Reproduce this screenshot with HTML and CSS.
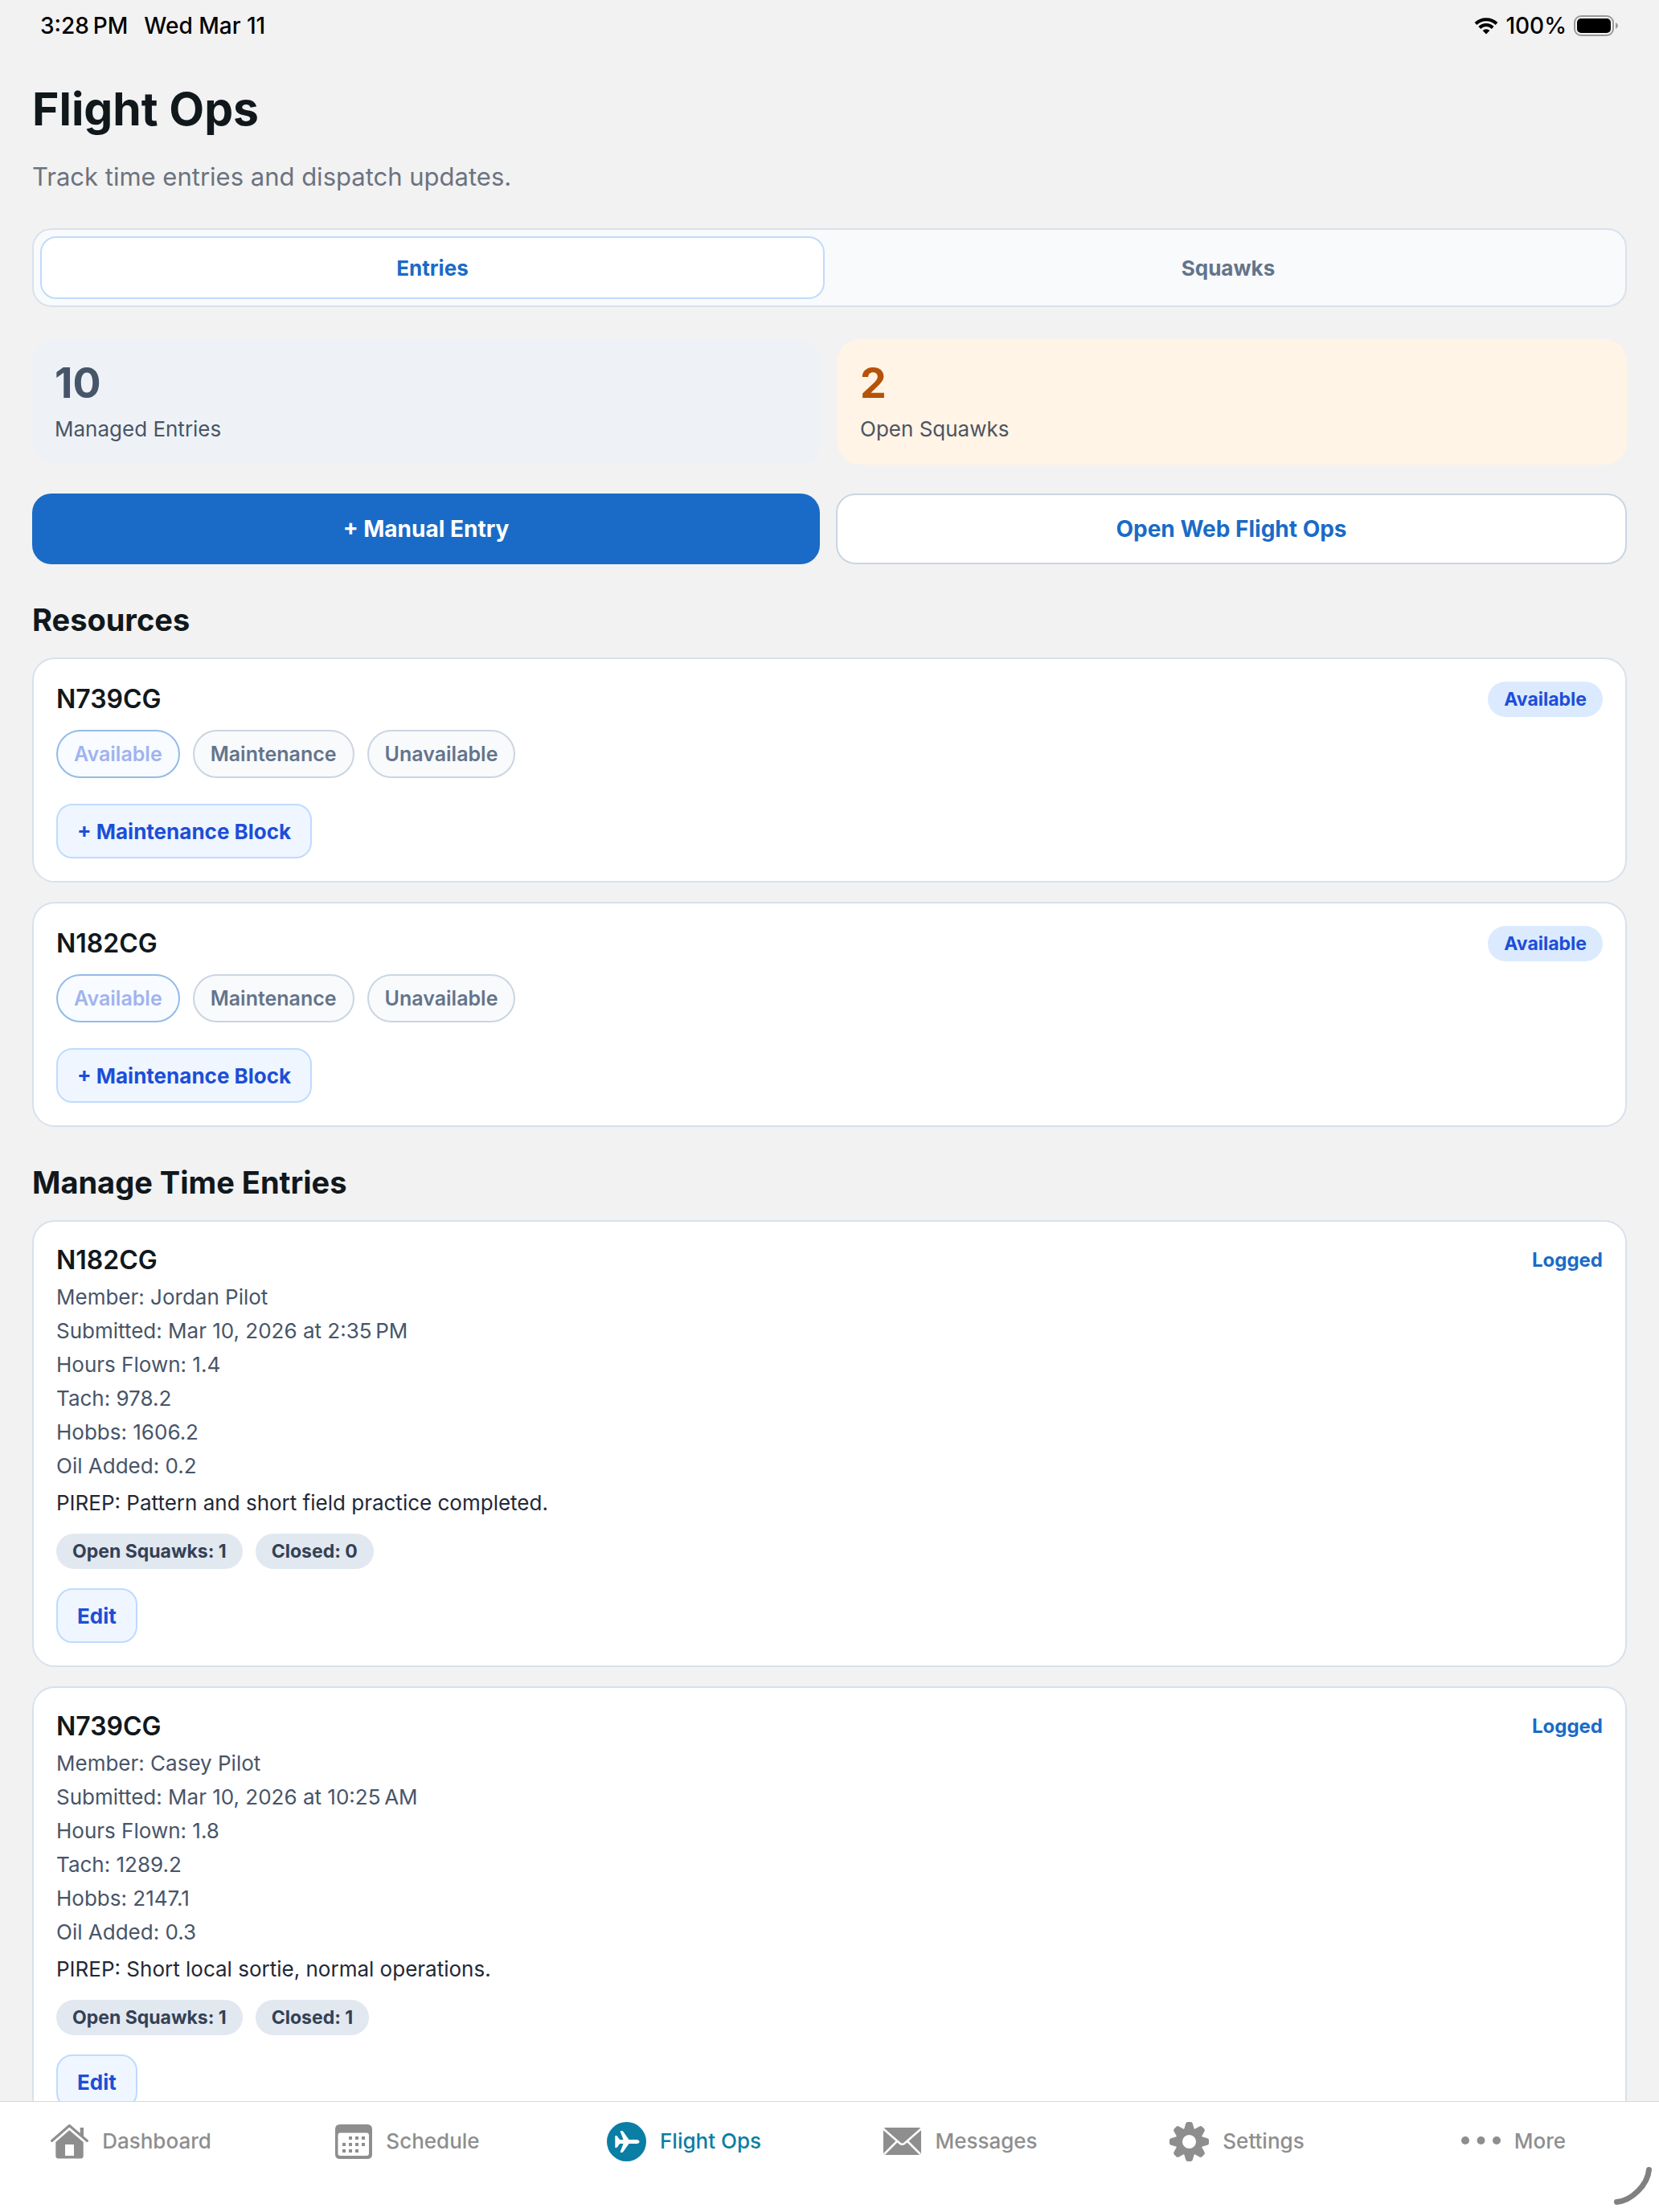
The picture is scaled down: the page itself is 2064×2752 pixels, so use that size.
FILE: index.html
```html
<!DOCTYPE html>
<html lang="en">
<head>
    <meta charset="UTF-8">
    <meta name="viewport" content="width=device-width, initial-scale=1.0">
    <title>Flight Ops</title>
    <link rel="stylesheet" href="styles.css">
</head>
<body>
    <div class="status-bar">
        <div class="status-left">
            <span>3:28&#8239;PM</span>
            <span>Wed Mar 11</span>
        </div>
        <div class="status-right">
            <svg width="30" height="22" viewBox="0 0 30 22" fill="none" stroke="#000" stroke-width="4">
                <path d="M2 8.500A18.500 18.500 0 0 1 28 8.500"/>
                <path d="M6.800 13.500A11.600 11.600 0 0 1 23.200 13.500"/>
                <path d="M15 21.500L10.600 17A6.200 6.200 0 0 1 19.400 17Z" fill="#000" stroke="none"/>
            </svg>
            <span>100%</span>
            <svg width="56" height="26" viewBox="0 0 56 26">
                <rect x="1" y="1" width="48" height="24" rx="8" fill="none" stroke="#999" stroke-width="2"/>
                <rect x="4" y="4" width="42" height="18" rx="5" fill="#000"/>
                <path d="M52 9q3 1.500 3 4t-3 4z" fill="#999"/>
            </svg>
        </div>
    </div>

    <main class="content">
        <h1>Flight Ops</h1>
        <p class="subtitle">Track time entries and dispatch updates.</p>

        <div class="segments">
            <button type="button" class="segment active">Entries</button>
            <button type="button" class="segment">Squawks</button>
        </div>

        <div class="stats">
            <div class="stat">
                <div class="stat-value">10</div>
                <div class="stat-label">Managed Entries</div>
            </div>
            <div class="stat stat-warning">
                <div class="stat-value">2</div>
                <div class="stat-label">Open Squawks</div>
            </div>
        </div>

        <div class="actions">
            <button type="button" class="action action-primary">+ Manual Entry</button>
            <a href="#web" class="action">Open Web Flight Ops</a>
        </div>

        <section>
            <h2>Resources</h2>

            <div class="card">
                <div class="card-header">
                    <h3>N739CG</h3>
                    <span class="badge">Available</span>
                </div>
                <div class="status-options">
                    <button type="button" class="status-option" disabled>Available</button>
                    <button type="button" class="status-option">Maintenance</button>
                    <button type="button" class="status-option">Unavailable</button>
                </div>
                <button type="button" class="small-button block-button">+ Maintenance Block</button>
            </div>

            <div class="card">
                <div class="card-header">
                    <h3>N182CG</h3>
                    <span class="badge">Available</span>
                </div>
                <div class="status-options">
                    <button type="button" class="status-option" disabled>Available</button>
                    <button type="button" class="status-option">Maintenance</button>
                    <button type="button" class="status-option">Unavailable</button>
                </div>
                <button type="button" class="small-button block-button">+ Maintenance Block</button>
            </div>
        </section>

        <section>
            <h2>Manage Time Entries</h2>

            <div class="card">
                <div class="card-header entry-header">
                    <h3>N182CG</h3>
                    <span class="entry-status">Logged</span>
                </div>
                <div class="entry-details">
                    <p>Member: Jordan Pilot</p>
                    <p>Submitted: Mar 10, 2026 at 2:35&#8239;PM</p>
                    <p>Hours Flown: 1.4</p>
                    <p>Tach: 978.2</p>
                    <p>Hobbs: 1606.2</p>
                    <p>Oil Added: 0.2</p>
                    <p class="pirep">PIREP: Pattern and short field practice completed.</p>
                </div>
                <div class="squawk-counts">
                    <span class="badge badge-gray">Open Squawks: 1</span>
                    <span class="badge badge-gray">Closed: 0</span>
                </div>
                <button type="button" class="small-button">Edit</button>
            </div>

            <div class="card">
                <div class="card-header entry-header">
                    <h3>N739CG</h3>
                    <span class="entry-status">Logged</span>
                </div>
                <div class="entry-details">
                    <p>Member: Casey Pilot</p>
                    <p>Submitted: Mar 10, 2026 at 10:25&#8239;AM</p>
                    <p>Hours Flown: 1.8</p>
                    <p>Tach: 1289.2</p>
                    <p>Hobbs: 2147.1</p>
                    <p>Oil Added: 0.3</p>
                    <p class="pirep">PIREP: Short local sortie, normal operations.</p>
                </div>
                <div class="squawk-counts">
                    <span class="badge badge-gray">Open Squawks: 1</span>
                    <span class="badge badge-gray">Closed: 1</span>
                </div>
                <button type="button" class="small-button">Edit</button>
            </div>
        </section>
    </main>

    <nav class="tab-bar">
        <a href="#dashboard" class="tab">
            <svg width="47" height="48" viewBox="0 0 47 48" fill="currentColor">
                <path d="M36.700 7h4.300v13l-4.300-4z"/>
                <path d="M1.500 23.500L23.300 4.500L45.500 23.500" fill="none" stroke="currentColor" stroke-width="3" stroke-linecap="round" stroke-linejoin="round"/>
                <path fill-rule="evenodd" d="M23.300 10.300L40.700 25V42q0 3.500-3.500 3.500H9.800q-3.500 0-3.500-3.500V25zM18 28v14h11V28z"/>
            </svg>
            <span>Dashboard</span>
        </a>
        <a href="#schedule" class="tab">
            <svg width="46" height="43" viewBox="0 0 46 43" fill="currentColor">
                <path fill-rule="evenodd" d="M6 0h34q6 0 6 6v31q0 6-6 6H6q-6 0-6-6V6q0-6 6-6zM6.500 10.500q-3 0-3 3V36q0 3 3 3H39q3 0 3-3V13.500q0-3-3-3z"/>
                <path d="M17 15h4v4h-4zM25 15h4v4h-4zM33 15h4v4h-4zM9 23h4v4h-4zM17 23h4v4h-4zM25 23h4v4h-4zM33 23h4v4h-4zM9 31h4v4h-4zM17 31h4v4h-4zM25 31h4v4h-4z"/>
            </svg>
            <span>Schedule</span>
        </a>
        <a href="#flight-ops" class="tab active">
            <svg width="49" height="49" viewBox="0 0 49 49">
                <circle cx="24.500" cy="24.500" r="24.500" fill="currentColor"/>
                <path d="M10.300 17.500q0-.5.500-.5h1q.7 0 1.200.7L16 22h4.500L16.800 12.200q-.4-1.200.8-1.200h1.200q.8 0 1.400.8L27.500 22H37q3.500.5 3.500 2.500T37 27h-9.500l-7.300 10.200q-.6.800-1.400.8h-1.200q-1.200 0-.8-1.200L20.500 27H16l-3 4.300q-.5.700-1.200.7h-1q-.5 0-.5-.5z" fill="#fff"/>
            </svg>
            <span>Flight Ops</span>
        </a>
        <a href="#messages" class="tab">
            <svg width="47" height="34" viewBox="0 0 47 34">
                <rect width="47" height="34" rx="3" fill="currentColor"/>
                <path d="M0 1.500L20.500 19.500q3 2.500 6 0L47 1.500M1 33L17 17M46 33L30 17" fill="none" stroke="#fff" stroke-width="2.500"/>
            </svg>
            <span>Messages</span>
        </a>
        <a href="#settings" class="tab">
            <svg width="49" height="49" viewBox="-24.500 -24.500 49 49">
                <defs>
                    <path id="tooth" d="M-6.500-15L-4.300-22.500Q-3.800-24.500-2-24.500H2Q3.800-24.500 4.300-22.500L6.500-15z"/>
                </defs>
                <g fill="currentColor">
                    <use href="#tooth"/>
                    <use href="#tooth" transform="rotate(45)"/>
                    <use href="#tooth" transform="rotate(90)"/>
                    <use href="#tooth" transform="rotate(135)"/>
                    <use href="#tooth" transform="rotate(180)"/>
                    <use href="#tooth" transform="rotate(225)"/>
                    <use href="#tooth" transform="rotate(270)"/>
                    <use href="#tooth" transform="rotate(315)"/>
                </g>
                <circle r="12.800" fill="none" stroke="currentColor" stroke-width="8.500"/>
            </svg>
            <span>Settings</span>
        </a>
        <a href="#more" class="tab">
            <svg width="49" height="12" viewBox="0 0 49 12" fill="currentColor">
                <circle cx="5" cy="5" r="5"/>
                <circle cx="24.500" cy="5" r="5"/>
                <circle cx="44" cy="5" r="5"/>
            </svg>
            <span>More</span>
        </a>
    </nav>

    <!-- corner handle -->
    <svg class="corner" width="47" height="47" viewBox="0 0 47 47">
        <path d="M43.500 3.500C42 22 22 42 3.500 43.500" fill="none" stroke="#808080" stroke-width="7" stroke-linecap="round"/>
    </svg>
</body>
</html>
```
FILE: styles.css
```css
* {
    box-sizing: border-box;
}
body {
    font-family: 'Inter', sans-serif;
    font-size: 26px;
    line-height: 32px;
    background-color: #f2f2f2;
    color: #11181c;
    margin: 0;
    height: 100vh;
    display: flex;
    flex-direction: column;
    overflow: hidden;
}
h1, h2, h3, p {
    margin: 0;
}
button {
    font-family: inherit;
    cursor: pointer;
}
a {
    text-decoration: none;
}
svg {
    flex-shrink: 0;
}
.status-bar {
    display: flex;
    justify-content: space-between;
    align-items: center;
    height: 64px;
    flex-shrink: 0;
    padding: 0 50px;
    font-size: 28px;
    font-weight: 500;
    color: #000;
}
.status-left {
    display: flex;
    gap: 20px;
}
.status-right {
    display: flex;
    align-items: center;
    gap: 9px;
}
.content {
    flex: 1;
    min-height: 0;
    overflow: hidden;
    padding: 36px 40px 0;
}
h1 {
    font-size: 57px;
    line-height: 72px;
    font-weight: 700;
}
.subtitle {
    margin: 28px 0 44px;
    font-size: 31px;
    line-height: 40px;
    color: #6b7280;
}
.segments {
    display: flex;
    gap: 16px;
    padding: 8px;
    background-color: #f8fafc;
    border: 2px solid #d8e1ec;
    border-radius: 24px;
}
.segment {
    flex: 1 1 0;
    height: 78px;
    padding: 0;
    background: none;
    border: none;
    border-radius: 20px;
    font-size: 26px;
    font-weight: 700;
    color: #64748b;
}
.segment.active {
    background-color: #fff;
    border: 2px solid #bfdbfe;
    color: #1a6bc7;
}
.stats, .actions {
    display: flex;
    gap: 20px;
}
.stats {
    margin: 40px 0 36px;
}
.stat {
    flex: 1 1 0;
    padding: 28px;
    background-color: #eef2f7;
    border-radius: 28px;
}
.stat-value {
    margin-bottom: 14px;
    font-size: 52px;
    line-height: 54px;
    font-weight: 700;
    color: #475569;
}
.stat-label {
    color: #4b5563;
}
.stat-warning {
    background-color: #fff4e5;
}
.stat-warning .stat-value {
    color: #b45309;
}
.action {
    flex: 1 1 0;
    display: flex;
    align-items: center;
    justify-content: center;
    height: 88px;
    padding: 0;
    background-color: #fff;
    border: 2px solid #cbd5e1;
    border-radius: 24px;
    font-size: 28px;
    font-weight: 700;
    color: #1a6bc7;
}
.action-primary {
    background-color: #1a6bc7;
    border: none;
    color: #fff;
}
section {
    margin-top: 44px;
}
h2 {
    margin-bottom: 22px;
    font-size: 38px;
    line-height: 50px;
    font-weight: 700;
}
.card {
    padding: 28px;
    background-color: #fff;
    border: 2px solid #d8e1ec;
    border-radius: 28px;
}
.card + .card {
    margin-top: 24px;
}
.card-header {
    display: flex;
    justify-content: space-between;
    align-items: center;
    height: 44px;
}
h3 {
    font-size: 32px;
    line-height: 40px;
    font-weight: 600;
}
.badge {
    padding: 6px 20px;
    background-color: #dbeafe;
    border-radius: 22px;
    font-size: 23px;
    font-weight: 700;
    color: #1d4ed8;
}
.badge-gray {
    background-color: #e2e8f0;
    color: #334155;
}
.status-options, .squawk-counts {
    display: flex;
    gap: 16px;
}
.status-options {
    margin-top: 16px;
}
.status-option {
    height: 60px;
    padding: 0 20px;
    background-color: #f8fafc;
    border: 2px solid #cbd5e1;
    border-radius: 30px;
    font-size: 25px;
    font-weight: 600;
    color: #64748b;
}
.status-option:disabled {
    background-color: #f8fbff;
    border-color: #93bbe8;
    color: #a0b3ef;
}
.small-button {
    height: 68px;
    padding: 0 24px;
    background-color: #eff6ff;
    border: 2px solid #bfdbfe;
    border-radius: 20px;
    font-size: 26px;
    font-weight: 700;
    color: #1d4ed8;
    display: block;
}
.block-button {
    margin-top: 32px;
}
.entry-header {
    height: 40px;
}
.entry-status {
    font-size: 24px;
    font-weight: 700;
    color: #1a6bc7;
}
.entry-details {
    display: flex;
    flex-direction: column;
    gap: 10px;
    margin: 10px 0 22px;
    color: #475569;
}
.entry-details .pirep {
    margin-top: 4px;
    color: #1f2937;
}
.squawk-counts {
    margin-bottom: 24px;
}
.tab-bar {
    display: flex;
    height: 138px;
    flex-shrink: 0;
    background-color: #fff;
    border-top: 1px solid #d8d8d8;
}
.tab {
    flex: 1 1 0;
    display: flex;
    align-items: center;
    justify-content: center;
    gap: 17px;
    height: 98px;
    padding-right: 18px;
    font-weight: 500;
    color: #8e8e8f;
}
.tab.active {
    color: #0a7ea4;
}
.corner {
    position: fixed;
    right: 9px;
    bottom: 9px;
}
```
